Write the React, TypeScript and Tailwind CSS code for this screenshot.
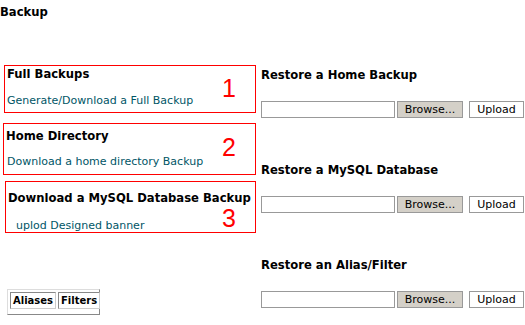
import * as React from "react";

const font = { fontFamily: '"DejaVu Sans", Verdana, sans-serif' };

function BackupBox({
  title,
  link,
  num,
  className,
  titleClass,
  linkClass,
  numClass,
}: {
  title: string;
  link: string;
  num: string;
  className?: string;
  titleClass?: string;
  linkClass?: string;
  numClass?: string;
}) {
  return (
    <div className={["relative border border-[#ff0000] h-[48px]", className ?? ""].join(" ")}>
      <div
        className={[
          "whitespace-nowrap pl-[2px] text-[11.6px] font-bold leading-[15px] text-black",
          titleClass ?? "pt-[1px]",
        ].join(" ")}
      >
        {title}
      </div>
      <div className={["whitespace-nowrap text-[11px] leading-[13px] text-[#005566]", linkClass ?? ""].join(" ")}>
        {link}
      </div>
      <span
        className={[
          "absolute right-[19px] font-['Liberation_Sans',Arial,sans-serif] text-[25px] leading-[28px] text-[#ff0000]",
          numClass ?? "top-[8px]",
        ].join(" ")}
      >
        {num}
      </span>
    </div>
  );
}

function Restore({ title, className }: { title: string; className?: string }) {
  return (
    <div className={className}>
      <div className="whitespace-nowrap text-[11.6px] font-bold leading-[15px] text-black">{title}</div>
      <div className="mt-[18px] flex items-center">
        <input
          type="text"
          className="h-[17px] w-[134px] border border-[#999999] bg-white outline-none"
        />
        <button
          type="button"
          className="ml-[2px] h-[17px] w-[66px] border border-[#999999] bg-[#d4d0c8] text-[11px] leading-[15px] text-black"
        >
          Browse...
        </button>
        <button
          type="button"
          className="ml-[6px] h-[17px] w-[55px] border border-[#999999] bg-white text-[11px] leading-[15px] text-black"
        >
          Upload
        </button>
      </div>
    </div>
  );
}

export default function App() {
  return (
    <div className="h-[325px] w-[525px] bg-white" style={font}>
      <div className="pt-[5px] text-[11.6px] font-bold leading-[15px] text-black">Backup</div>
      <div className="mt-[45px] flex">
        <div className="w-[256px] shrink-0">
          <BackupBox
            title="Full Backups"
            link="Generate/Download a Full Backup"
            num="1"
            className="ml-[4px]"
            linkClass="pl-[2px] mt-[12px]"
          />
          <BackupBox
            title="Home Directory"
            link="Download a home directory Backup"
            num="2"
            className="ml-[3px] mt-[10px] h-[52px]"
            titleClass="pt-[5px]"
            linkClass="pl-[3px] mt-[11px]"
            numClass="top-[9px]"
          />
          <BackupBox
            title="Download a MySQL Database Backup"
            link="uplod Designed banner"
            num="3"
            className="ml-[5px] mt-[6px] h-[52px]"
            titleClass="pt-[9px]"
            linkClass="pl-[10px] mt-[13px]"
            numClass="top-[22px]"
          />
          <div className="ml-[7px] mt-[56px] flex h-[26px] w-[93px] items-start gap-[2px] border border-t-[#dddddd] border-l-[#dddddd] border-b-[#888888] border-r-[#888888] p-[2px]">
            <span className="flex h-[17px] items-center border border-t-[#888888] border-l-[#888888] border-b-[#cccccc] border-r-[#cccccc] px-[2px] text-[10px] font-bold leading-[14px] text-black">
              Aliases
            </span>
            <span className="flex h-[17px] items-center border border-t-[#888888] border-l-[#888888] border-b-[#cccccc] border-r-[#cccccc] px-[2px] text-[10px] font-bold leading-[14px] text-black">
              Filters
            </span>
          </div>
        </div>
        <div className="ml-[5px] pt-[3px]">
          <Restore title="Restore a Home Backup" />
          <Restore title="Restore a MySQL Database" className="mt-[45px]" />
          <Restore title="Restore an Alias/Filter" className="mt-[45px]" />
        </div>
      </div>
    </div>
  );
}
